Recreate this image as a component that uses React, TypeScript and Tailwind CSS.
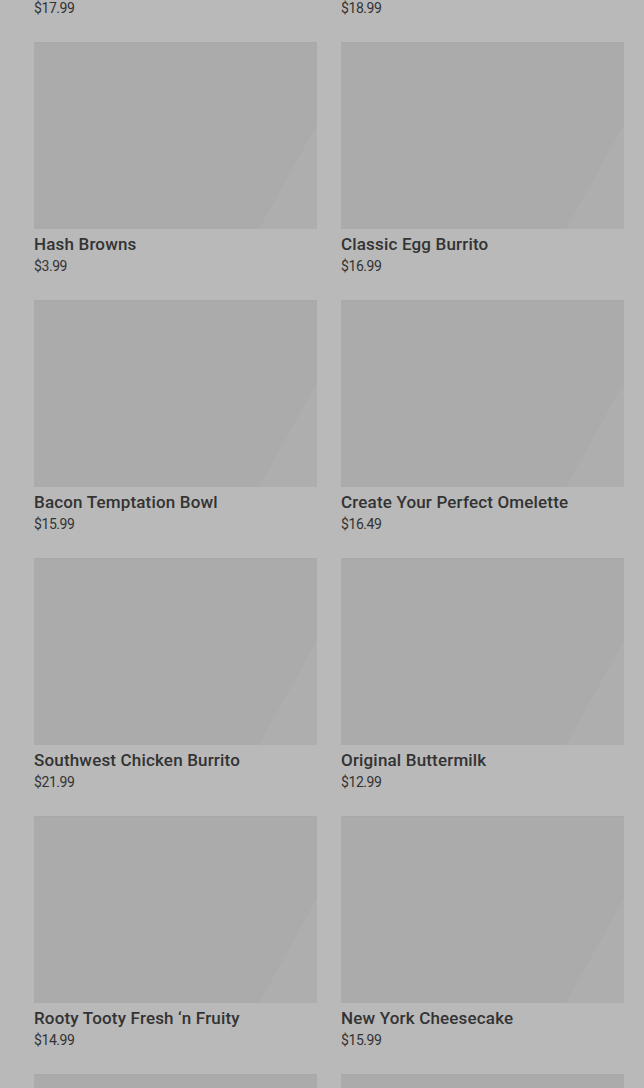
const ITEMS = [
  { name: "Breakfast Sampler", price: "$17.99" },
  { name: "Steak & Eggs", price: "$18.99" },
  { name: "Hash Browns", price: "$3.99" },
  { name: "Classic Egg Burrito", price: "$16.99" },
  { name: "Bacon Temptation Bowl", price: "$15.99" },
  { name: "Create Your Perfect Omelette", price: "$16.49" },
  { name: "Southwest Chicken Burrito", price: "$21.99" },
  { name: "Original Buttermilk", price: "$12.99" },
  { name: "Rooty Tooty Fresh ‘n Fruity", price: "$14.99" },
  { name: "New York Cheesecake", price: "$15.99" },
  { name: "Chicken & Waffles", price: "$17.49" },
  { name: "Big Steak Omelette", price: "$19.99" },
];

function MenuCard({ name, price }: { name: string; price: string }) {
  return (
    <div className="flex flex-col">
      <div className="h-[187px] w-full border-t border-[#a8a8a8] bg-[linear-gradient(119deg,#ababab_85%,#aeaeae_85%)]" />
      <p className="mt-[3px] text-[17px] font-medium leading-6 tracking-[0.01em] text-[#333333]">{name}</p>
      <p className="text-[14px] leading-5 tracking-[-0.03em] text-[#333333]">{price}</p>
    </div>
  );
}

export default function App() {
  return (
    <div className="h-[1088px] overflow-hidden bg-[#b9b9b9] font-['Roboto',sans-serif]">
      <div className="-mt-[216px] grid grid-cols-2 gap-x-6 gap-y-[24px] pl-[34px] pr-5">
        {ITEMS.map((it) => (
          <MenuCard key={it.name} name={it.name} price={it.price} />
        ))}
      </div>
    </div>
  );
}
